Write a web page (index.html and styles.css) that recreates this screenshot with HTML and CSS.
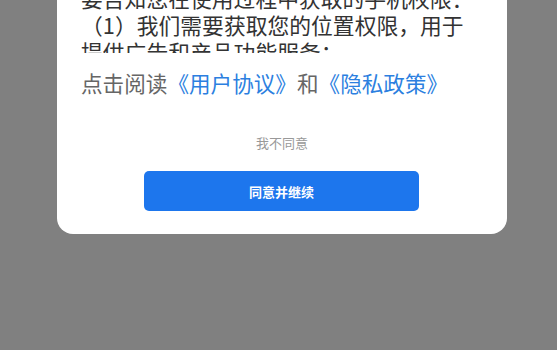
FILE: index.html
```html
<!DOCTYPE html>
<html lang="zh-CN">
<head>
<meta charset="utf-8">
<link rel="stylesheet" href="styles.css">
</head>
<body>
<div class="card">
  <div class="scroll">
    <p class="body">要告知您在使用过程中获取的手机权限：<br>（1）我们需要获取您的位置权限，用于提供广告和产品功能服务；</p>
  </div>
  <p class="read">点击阅读<a class="link">《用户协议》</a>和<a class="link">《隐私政策》</a></p>
  <div class="disagree">我不同意</div>
  <button class="agree">同意并继续</button>
</div>
</body>
</html>
```
FILE: styles.css
```css
html, body {
  margin: 0;
  padding: 0;
  height: 350px;
  overflow: hidden;
}
body {
  background: #808080;
  font-family: "Noto Sans CJK SC", "Noto Sans", sans-serif;
}
.card {
  width: 450px;
  box-sizing: border-box;
  margin: -40px 0 0 57px;
  background: #fff;
  border-radius: 0 0 16px 16px;
  padding: 0 24px 23px;
  display: flex;
  flex-direction: column;
  align-items: stretch;
}
.scroll {
  height: 93px;
  overflow: hidden;
  padding-top: 24px;
  box-sizing: border-box;
}
.body {
  margin: 0;
  font-size: 21.8px;
  line-height: 27px;
  color: #333;
}
.read {
  margin: 16px 0 0;
  font-size: 21.6px;
  line-height: 27px;
  color: #666;
  white-space: nowrap;
}
.link {
  color: #2c7fe0;
  text-decoration: none;
}
.disagree {
  margin-top: 37px;
  text-align: center;
  font-size: 13px;
  line-height: 20px;
  color: #999;
}
.agree {
  align-self: center;
  margin: 18px 0 0 -1px;
  width: 275px;
  height: 40px;
  border: none;
  border-radius: 5px;
  background: #1d76ed;
  color: #fff;
  font-family: "Noto Sans CJK SC", sans-serif;
  font-size: 13px;
  font-weight: 700;
  padding: 0;
}
```
